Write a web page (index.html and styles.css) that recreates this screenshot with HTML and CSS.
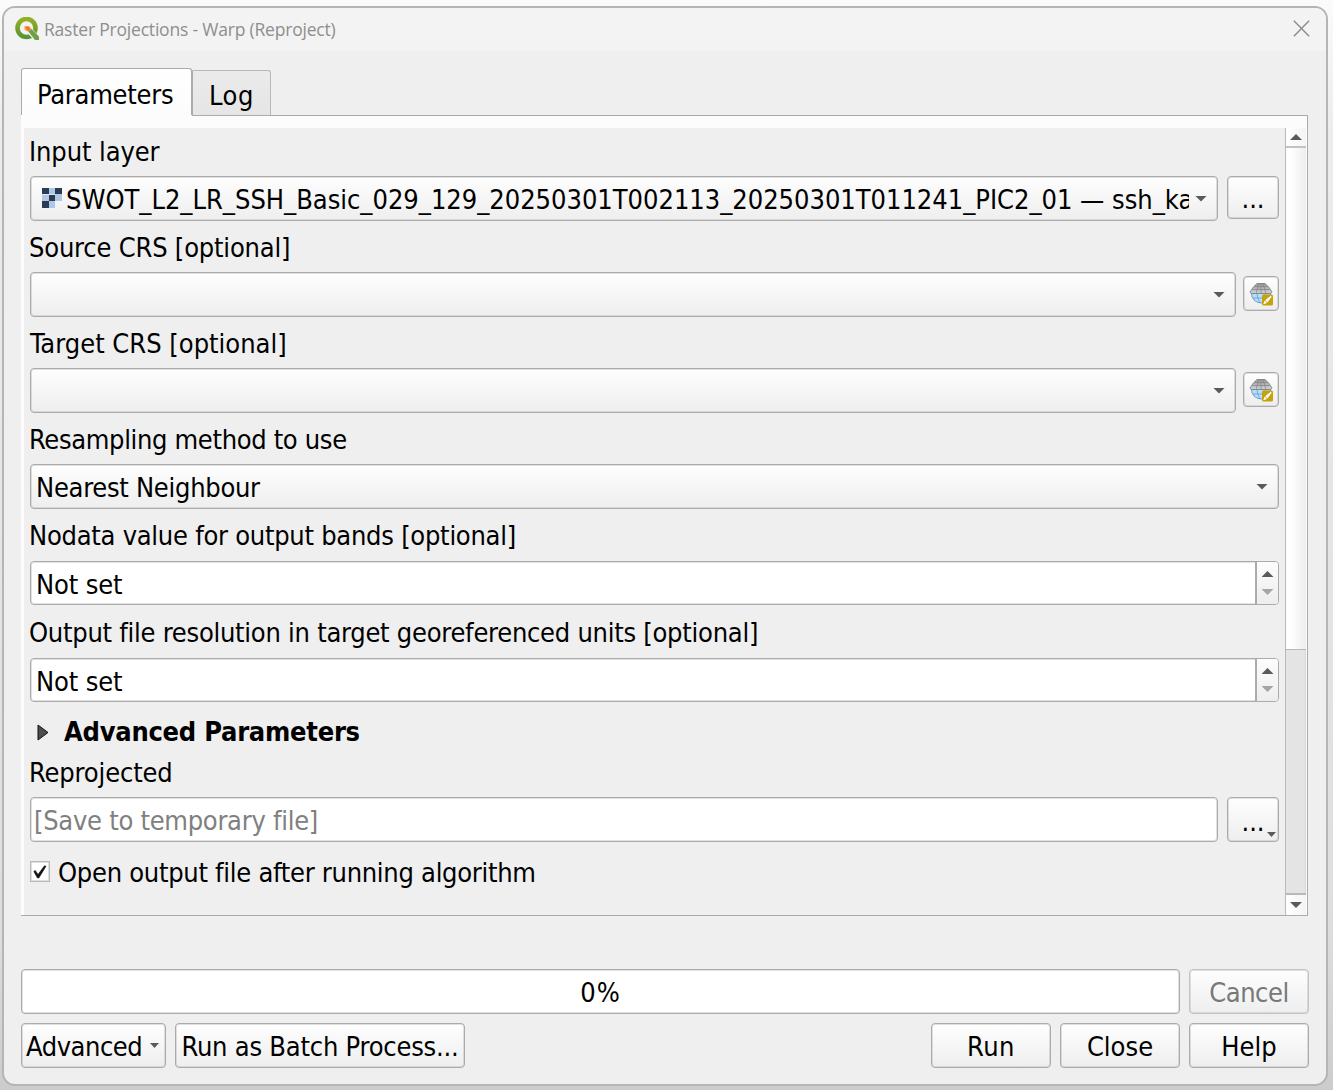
FILE: index.html
```html
<!DOCTYPE html>
<html lang="en">
<head>
<meta charset="utf-8">
<title>Raster Projections - Warp (Reproject)</title>
<link rel="stylesheet" href="styles.css">
</head>
<body>
<svg class="defs" width="0" height="0" aria-hidden="true">
  <defs>
    <linearGradient id="q-green" x1="0" y1="0" x2="0" y2="1"><stop offset="0" stop-color="#93b023"/><stop offset="1" stop-color="#589632"/></linearGradient>
    <linearGradient id="gray-cap" x1="0" y1="0" x2="0" y2="1"><stop offset="0" stop-color="#999"/><stop offset="1" stop-color="#d2d3d5"/></linearGradient>
    <symbol id="globe" viewBox="0 0 24 24">
      <path d="M2.500 11.500a9.500 9.500 0 0 0 19 0z" fill="#b9ddfa" stroke="#6b9ccc"/>
      <path d="M8 12q.5 5 3 9M16 12q-.5 5-3 9M4 16h16" fill="none" stroke="#6b9ccc" stroke-width=".8"/>
      <path d="M8 1.500h8q4 3 7 8.500l-1 1.500H2L1 10q3-5.500 7-8.500z" fill="url(#gray-cap)" stroke="#808285" stroke-width=".9"/>
      <path d="M5.500 4.500h13M3.500 7.500h17M10 1.500 7 11.500M14 1.500l3 10M12 1.500v10" fill="none" stroke="#808285" stroke-width=".7"/>
      <rect x="13" y="12.500" width="11" height="11" rx="1.500" fill="#c9a20b"/>
      <path d="m14.300 22.200 1.300-3.600 2.300 2.300zM16.200 18.200l5.500-4.500 1 1-4.300 5.700z" fill="#fff"/>
    </symbol>
  </defs>
</svg>

<div class="window">
  <header class="titlebar">
    <svg class="logo" viewBox="0 0 24 24">
      <circle cx="11.500" cy="11" r="9" fill="none" stroke="url(#q-green)" stroke-width="4.600"/>
      <path d="M12 11h4.500l7 8v4h-4.500L12 15.500z" fill="#f2f2f2"/>
      <path d="m13 14 3.500-2L24 19.500V23h-4z" fill="#6ea046"/>
      <path d="M9.500 9h4.500l2.500 3-3.500 2.500-3.500-1.500z" fill="#f6a04a"/>
      <path d="m10.500 10 3 .3 1.500 2-2 1.500z" fill="#ee6a1c"/>
    </svg>
    <span class="title">Raster Projections - Warp (Reproject)</span>
    <svg class="close" viewBox="0 0 16 16"><path d="M.8.8l14.400 14.400M15.200.8.8 15.200" stroke="#8b8b8b" stroke-width="1.300"/></svg>
  </header>

  <nav class="tabs">
    <div class="tab tab-active"><span class="t-parameters">Parameters</span></div>
    <div class="tab tab-log"><span class="t-log">Log</span></div>
  </nav>

  <main class="pane">
    <div class="form">
      <div class="label label-first">Input layer</div>
      <div class="row gap-wide">
        <div class="button-face combo">
          <svg class="raster" viewBox="0 0 20 20" shape-rendering="crispEdges">
            <path d="M0 0h20v13H0zM0 13h13v7H0z" fill="#aec8e5"/>
            <path d="M0 0h7v6H0zM13 0h7v6h-7zM7 7h6v6H7zM0 13h7v7H0z" fill="#2c3b51"/>
            <path d="M0 6.500h13" stroke="#dbe8f5" />
          </svg>
          <span class="combo-text layer-name">SWOT_L2_LR_SSH_Basic_029_129_20250301T002113_20250301T011241_PIC2_01 — ssh_ka</span>
          <i class="arrow down"></i>
        </div>
        <div class="button-face browse browse-top"><span class="dots">...</span></div>
      </div>
      <div class="label"><span class="t-source">Source CRS [optional]</span></div>
      <div class="row gap-narrow">
        <div class="button-face combo"><i class="arrow down"></i></div>
        <div class="button-face crs"><svg viewBox="0 0 24 24"><use href="#globe"/></svg></div>
      </div>
      <div class="label"><span class="t-target">Target CRS [optional]</span></div>
      <div class="row gap-narrow">
        <div class="button-face combo"><i class="arrow down"></i></div>
        <div class="button-face crs"><svg viewBox="0 0 24 24"><use href="#globe"/></svg></div>
      </div>
      <div class="label"><span class="t-resampling">Resampling method to use</span></div>
      <div class="row">
        <div class="button-face combo"><span class="combo-text">Nearest Neighbour</span><i class="arrow down"></i></div>
      </div>
      <div class="label label-nodata"><span class="t-nodata">Nodata value for output bands [optional]</span></div>
      <div class="spin"><span class="spin-text">Not set</span><span class="steps"><i class="arrow up"></i><i class="arrow down dim"></i></span></div>
      <div class="label label-resolution"><span class="t-resolution">Output file resolution in target georeferenced units [optional]</span></div>
      <div class="spin"><span class="spin-text">Not set</span><span class="steps"><i class="arrow up"></i><i class="arrow down dim"></i></span></div>
      <div class="group-head">
        <svg class="expander" viewBox="0 0 12 17"><path d="M1 1v15l10-7.500z" fill="#4d4d4d" stroke="#111"/></svg>
        <span>Advanced Parameters</span>
      </div>
      <div class="label label-output">Reprojected</div>
      <div class="row gap-wide">
        <div class="field"><span class="placeholder">[Save to temporary file]</span></div>
        <div class="button-face browse browse-menu"><span class="dots">...</span><i class="arrow down small"></i></div>
      </div>
      <div class="check-row">
        <span class="checkbox"><svg viewBox="0 0 14 14"><path d="M.8 6.500 2.300 5.500 5 9.500 11.500.8 13 1.300 5.800 13H4.500z" fill="#111" stroke="#111" stroke-width=".6"/></svg></span>
        <span class="t-open">Open output file after running algorithm</span>
      </div>
    </div>
    <div class="scrollbar">
      <div class="scroll-button scroll-up"><i class="arrow up"></i></div>
      <div class="thumb"></div>
      <div class="groove"></div>
      <div class="scroll-button scroll-down"><i class="arrow down"></i></div>
    </div>
  </main>

  <div class="progress-row">
    <div class="field progress"><span>0%</span></div>
    <div class="button-face action disabled"><span class="t-cancel">Cancel</span></div>
  </div>
  <footer class="actions">
    <div class="button-face advanced"><span>Advanced</span><i class="arrow down small"></i></div>
    <div class="button-face batch"><span>Run as Batch Process...</span></div>
    <div class="spacer"></div>
    <div class="button-face action"><span class="t-run">Run</span></div>
    <div class="button-face action"><span>Close</span></div>
    <div class="button-face action"><span class="t-help">Help</span></div>
  </footer>
</div>
</body>
</html>
```
FILE: styles.css
```css
* { box-sizing: border-box; }

body {
  margin: 0;
  height: 1090px;
  overflow: hidden;
  padding: 6px 5px 4px 2px;
  background: linear-gradient(#fbfbfb, #ececec 12%, #dedede 85%, #cccccc);
  font: 27px/32px "DejaVu Sans Condensed", "DejaVu Sans", sans-serif;
  font-variant-ligatures: none;
  color: #000;
}

.defs { position: absolute; }

.window {
  height: 1080px;
  display: flex;
  flex-direction: column;
  border: 2px solid #b5b5b5;
  border-radius: 13px;
  background: #efefef;
  overflow: hidden;
}

.titlebar {
  height: 43px;
  flex: none;
  display: flex;
  align-items: center;
  padding: 0 16px 2px 11px;
  background: #f3f3f3;
}
.logo { width: 24px; height: 24px; margin-right: 5px; }
.title {
  flex: 1;
  font: 17.5px/24px "Open Sans", sans-serif;
  letter-spacing: -0.2px;
  color: #8e8e8e;
}
.close { width: 17px; height: 17px; }

.tabs {
  height: 65px;
  flex: none;
  display: flex;
  align-items: flex-end;
  padding-left: 17px;
}
.tab { display: flex; align-items: center; border: 1px solid #ababab; }
.tab-active {
  width: 171px;
  height: 48px;
  padding: 4px 0 0 16px;
  border-bottom: 0;
  border-radius: 3px 3px 0 0;
  background: linear-gradient(#fff, #fcfcfc);
}
.tab-log {
  width: 79px;
  height: 46px;
  padding: 4px 0 0 16px;
  border: 1px solid #b9b9b9;
  border-left: 1px solid #ababab;
  border-bottom: 0;
  border-radius: 0 3px 0 0;
  background: linear-gradient(#ebebeb, #e5e5e5);
}

.pane {
  height: 801px;
  flex: none;
  margin: -1px 18px 0 17px;
  display: flex;
  align-items: stretch;
  padding: 13px 1px 0 3px;
  border-bottom: 1px solid #ababab;
  border-right: 1px solid #ababab;
  background:
    linear-gradient(#ababab, #ababab) 171px 0 / 100% 1px no-repeat,
    #fcfcfc;
}

.form {
  flex: 1;
  min-width: 0;
  padding: 0 6px;
  background: #efefef;
}

.label { height: 51px; padding: 11px 0 0; margin-left: -1px; white-space: nowrap; }
.label-first { height: 48px; padding-top: 8px; letter-spacing: -0.1px; }
.label-nodata { height: 52px; }
.label-resolution { height: 53px; padding-top: 12px; }
.label-output { height: 47px; padding-top: 7px; letter-spacing: -0.15px; }

.row { display: flex; height: 45px; }
.gap-wide { gap: 9px; }
.gap-narrow { gap: 7px; }

.button-face {
  display: flex;
  align-items: center;
  flex: none;
  border: 1px solid #ababab;
  border-radius: 4px;
  background: linear-gradient(#fefefe, #eeeeee);
  box-shadow: inset 0 0 0 1px rgba(171, 171, 171, 0.35);
}

.combo { flex: 1; min-width: 0; padding: 2px 10px 0 6px; }
.combo .arrow { margin: -2px 0 0 auto; flex: none; }
.combo-text { white-space: nowrap; letter-spacing: -0.28px; margin-left: -1px; }
.layer-name { letter-spacing: -0.02px; overflow: hidden; flex: 1; margin: 0 6px 0 4px; }
.raster { flex: none; width: 20px; height: 20px; margin: -3px 0 0 5px; }

.browse { width: 52px; justify-content: center; }
.browse-top { height: 43px; padding-top: 3px; }
.browse-menu { position: relative; padding-top: 4px; }
.browse-menu .arrow { position: absolute; right: 2px; bottom: 4px; }

.crs { width: 36px; height: 35px; margin-top: 4px; justify-content: center; }
.crs svg { width: 24px; height: 24px; }

.arrow { display: block; width: 12px; height: 6px; background: #5a5a5a; }
.down { clip-path: polygon(0 0, 100% 0, 50% 100%); }
.up { clip-path: polygon(0 100%, 50% 0, 100% 100%); }
.small { width: 9px; height: 5px; }
.dim { background: #a5a5a5; }

.spin, .field {
  display: flex;
  border: 1px solid #ababab;
  border-radius: 4px;
  background: #fff;
  box-shadow: inset 0 0 0 1px rgba(171, 171, 171, 0.35);
}
.spin { height: 44px; }
.spin-text { flex: 1; padding: 7px 0 0 5px; letter-spacing: -0.15px; }
.steps {
  width: 23px;
  display: flex;
  flex-direction: column;
  align-items: center;
  justify-content: center;
  gap: 12px;
  border-left: 2px solid #ababab;
  border-radius: 0 3px 3px 0;
  background: linear-gradient(#fdfdfd, #ededed);
}

.group-head {
  height: 48px;
  display: flex;
  align-items: center;
  padding: 12px 0 0 7px;
  gap: 15px;
  font-weight: bold;
  letter-spacing: -0.25px;
}
.expander { width: 12px; height: 17px; }

.field { flex: 1; align-items: center; }
.placeholder { padding: 2px 0 0 3px; color: #808080; letter-spacing: -0.28px; }

.check-row { display: flex; align-items: center; height: 60px; gap: 8px; padding-top: 1px; }
.checkbox {
  display: flex;
  align-items: center;
  justify-content: center;
  width: 20px;
  height: 21px;
  margin-top: -2px;
  border: 1px solid #b9b9b9;
  box-shadow: inset 0 0 0 1px #e0e0e0;
  background: #fff;
}
.checkbox svg { width: 14px; height: 14px; }

.scrollbar { width: 21px; display: flex; flex-direction: column; border-left: 1px solid #b9b9b9; background: #fcfcfc; }
.scroll-button { display: flex; align-items: center; justify-content: center; background: linear-gradient(90deg, #fff, #f4f4f4); }
.scroll-up { height: 20px; border-bottom: 2px solid #c2c2c2; }
.scroll-down { height: 22px; border-top: 2px solid #b9b9b9; }
.thumb { height: 502px; border-bottom: 1px solid #b9b9b9; background: linear-gradient(90deg, #fff 20%, #eeeeee); }
.groove { flex: 1; border-right: 1px solid #d6d6d6; background: #e4e4e4; }

.progress-row, .actions { display: flex; gap: 9px; margin: 53px 17px 0; height: 45px; flex: none; }
.progress-row span { letter-spacing: 1px; }
.progress { justify-content: center; padding-top: 3px; }
.actions { margin-top: 9px; }
.spacer { flex: 1; }
.action { width: 120px; justify-content: center; padding-top: 3px; }
.disabled { color: #787878; border-color: #c3c3c3; }
.advanced { width: 145px; padding: 3px 6px 0 4px; justify-content: space-between; letter-spacing: -0.45px; }
.advanced .arrow { margin-top: -3px; }
.batch { width: 290px; padding-top: 3px; justify-content: center; letter-spacing: -0.22px; }

.progress-row .t-cancel { letter-spacing: -0.45px; }
.t-parameters { letter-spacing: -0.25px; margin-left: -1px; }
.t-log { letter-spacing: 0.5px; }
.t-source { letter-spacing: -0.2px; }
.t-target { letter-spacing: 0; margin-left: 1px; }
.t-resampling { letter-spacing: -0.34px; }
.t-nodata { letter-spacing: -0.26px; }
.t-resolution { letter-spacing: -0.26px; }
.t-open { letter-spacing: -0.28px; }
.t-run { letter-spacing: 0.5px; }
.t-help { letter-spacing: 0; }
```
